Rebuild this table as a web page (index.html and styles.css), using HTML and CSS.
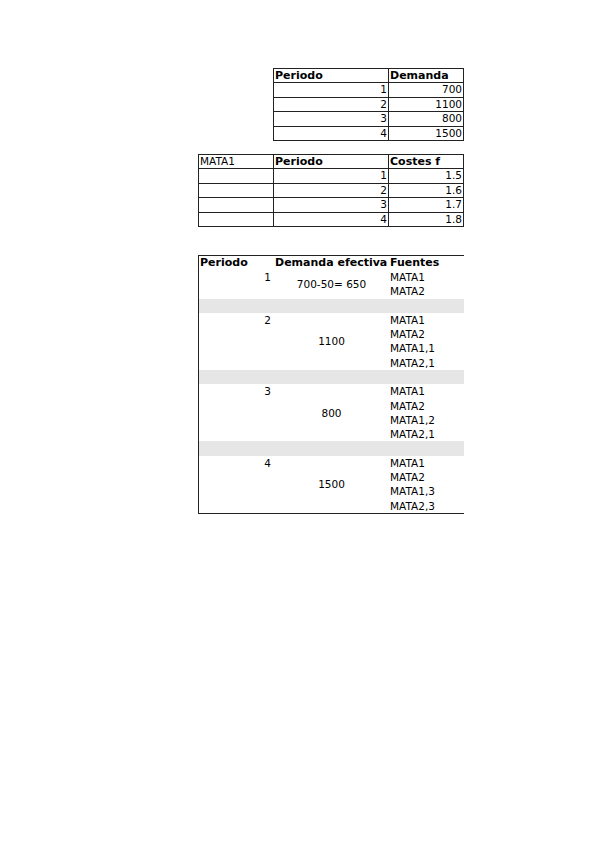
FILE: index.html
```html
<!DOCTYPE html>
<html>
<head>
<meta charset="utf-8">
<link rel="stylesheet" href="styles.css">
</head>
<body>
<div class="page">
  <div class="grid t1">
    <div class="c b">Periodo</div><div class="c b">Demanda</div>
    <div class="c r">1</div><div class="c r">700</div>
    <div class="c r">2</div><div class="c r">1100</div>
    <div class="c r">3</div><div class="c r">800</div>
    <div class="c r">4</div><div class="c r">1500</div>
  </div>

  <div class="grid t2">
    <div class="c">MATA1</div><div class="c b">Periodo</div><div class="c b">Costes f</div>
    <div class="c"></div><div class="c r">1</div><div class="c r">1.5</div>
    <div class="c"></div><div class="c r">2</div><div class="c r">1.6</div>
    <div class="c"></div><div class="c r">3</div><div class="c r">1.7</div>
    <div class="c"></div><div class="c r">4</div><div class="c r">1.8</div>
  </div>

  <div class="t3">
    <div class="row head">
      <div class="h">Periodo</div>
      <div class="h">Demanda efectiva</div>
      <div class="h">Fuentes</div>
    </div>
    <div class="row">
      <div class="per">1</div>
      <div class="dem">700-50= 650</div>
      <div class="src"><div class="ln">MATA1</div><div class="ln">MATA2</div></div>
    </div>
    <div class="sep"></div>
    <div class="row">
      <div class="per">2</div>
      <div class="dem">1100</div>
      <div class="src"><div class="ln">MATA1</div><div class="ln">MATA2</div><div class="ln">MATA1,1</div><div class="ln">MATA2,1</div></div>
    </div>
    <div class="sep"></div>
    <div class="row">
      <div class="per">3</div>
      <div class="dem">800</div>
      <div class="src"><div class="ln">MATA1</div><div class="ln">MATA2</div><div class="ln">MATA1,2</div><div class="ln">MATA2,1</div></div>
    </div>
    <div class="sep"></div>
    <div class="row">
      <div class="per">4</div>
      <div class="dem">1500</div>
      <div class="src"><div class="ln">MATA1</div><div class="ln">MATA2</div><div class="ln">MATA1,3</div><div class="ln">MATA2,3</div></div>
    </div>
  </div>
</div>
</body>
</html>
```
FILE: styles.css
```css
html, body {
  margin: 0;
  padding: 0;
  background: #ffffff;
}
body {
  font-family: "DejaVu Sans", "Liberation Sans", sans-serif;
  font-size: 10.5px;
  color: #000;
}
.page {
  padding-top: 68px;
  padding-left: 198px;
  width: 266px;
}
.grid {
  display: grid;
  border-top: 1px solid #222;
  border-left: 1px solid #222;
  grid-auto-rows: 14.4px;
  box-sizing: border-box;
}
.t1 {
  margin-left: 75px;
  width: 191px;
  grid-template-columns: 115px 75px;
}
.t2 {
  margin-top: 13px;
  width: 266px;
  grid-template-columns: 75px 115px 75px;
}
.c {
  border-right: 1px solid #222;
  border-bottom: 1px solid #222;
  line-height: 13.4px;
  padding: 0 1px;
  white-space: nowrap;
  overflow: hidden;
}
.b { font-weight: bold; font-size: 11px; }
.r { text-align: right; }

.t3 {
  margin-top: 28px;
  border-top: 1px solid #222;
  border-left: 1px solid #222;
  border-bottom: 1px solid #222;
  width: 266px;
  box-sizing: border-box;
}
.row {
  display: grid;
  grid-template-columns: 75px 115px 75px;
  line-height: 14.3px;
}
.head {
  line-height: 14px;
}
.h {
  font-weight: bold;
  font-size: 11px;
  padding-left: 1px;
  white-space: nowrap;
}
.per {
  text-align: right;
  padding-right: 3px;
}
.dem {
  display: flex;
  align-items: center;
  justify-content: center;
}
.src {
  padding-left: 1px;
}
.ln {
  height: 14.3px;
}
.sep {
  height: 14.3px;
  background: #e6e6e6;
}
```
